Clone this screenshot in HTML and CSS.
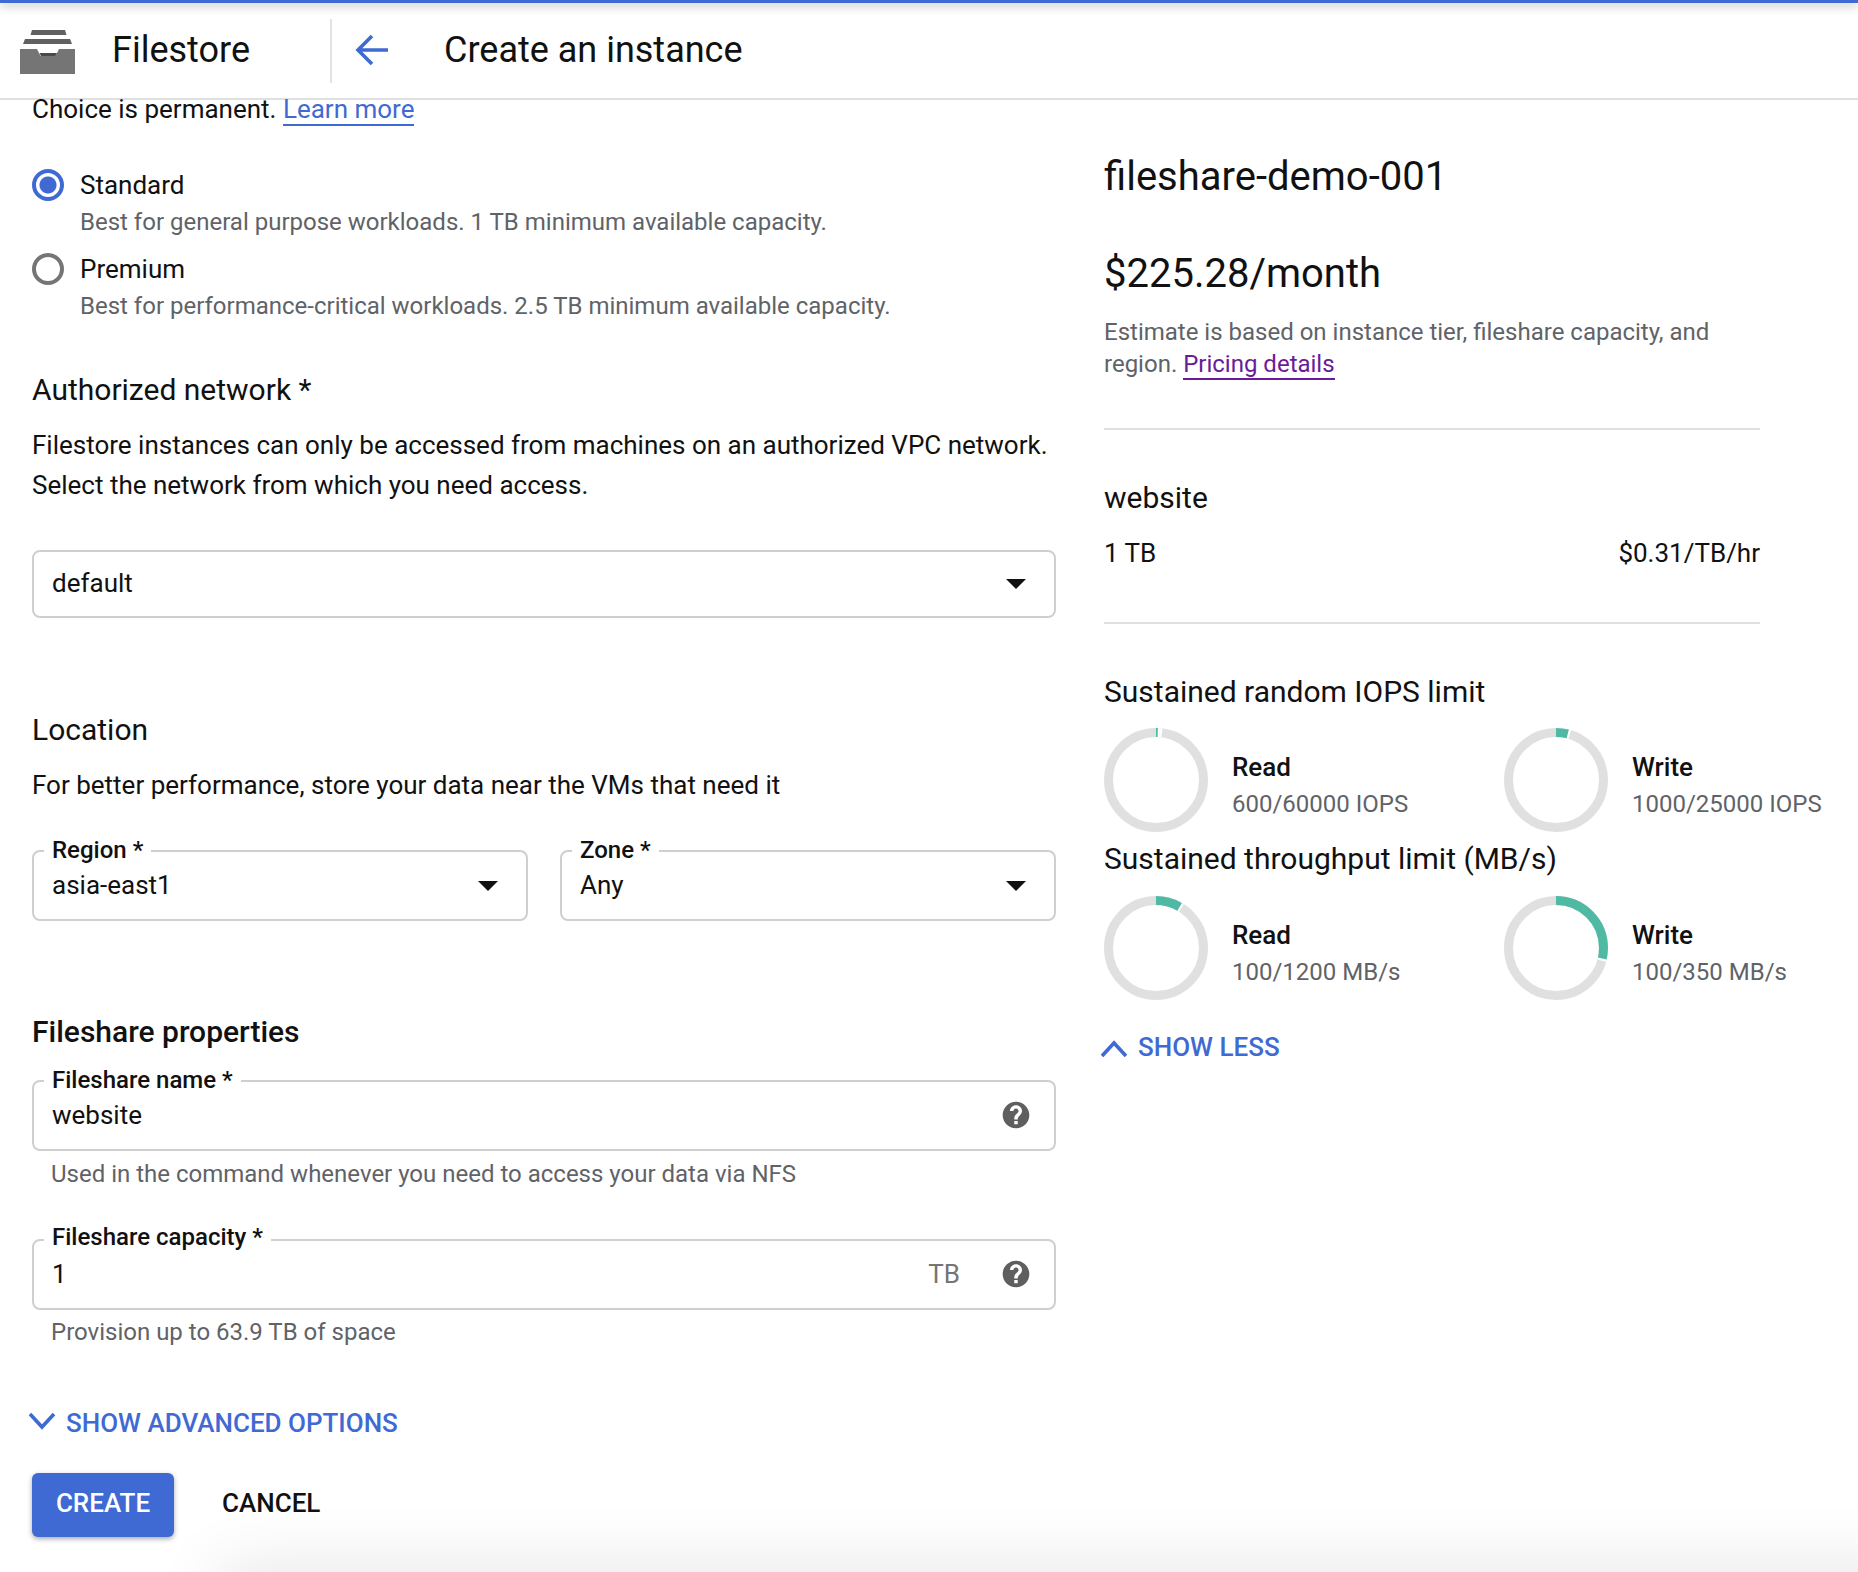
FILE: index.html
```html
<!DOCTYPE html>
<html lang="en">
<head>
<meta charset="utf-8">
<title>Create an instance</title>
<link rel="stylesheet" href="styles.css">
</head>
<body>
<div class="topbar"></div>
<header class="header">
  <div class="brand">
    <svg class="logo" width="56" height="44" viewBox="0 0 56 44"><path fill="#616161" d="M12 0h33l1.500 5H10.500z"/><path fill="#616161" d="M5 9h45l2 5H3z"/><path fill="#757575" d="M0 19h17l3.500 7h15l3.500-7h16v25H0z"/><path fill="#4a4a4a" d="M19.500 23h17.500l-1.500 3H21z"/></svg>
    <span class="brand-name">Filestore</span>
  </div>
  <svg class="back" width="36" height="36" viewBox="0 0 36 36"><path fill="none" stroke="#3f6ad4" stroke-width="3.600" d="M33 18H5M17 4L3 18l14 14"/></svg>
  <h1 class="page-title">Create an instance</h1>
</header>
<main class="page">
  <section class="left">
    <p class="body-text choice">Choice is permanent. <a class="link" href="#">Learn more</a></p>
    <div class="radio-row first">
      <span class="radio on"></span>
      <div><div class="radio-label">Standard</div><div class="muted">Best for general purpose workloads. 1 TB minimum available capacity.</div></div>
    </div>
    <div class="radio-row">
      <span class="radio"></span>
      <div><div class="radio-label">Premium</div><div class="muted">Best for performance-critical workloads. 2.5 TB minimum available capacity.</div></div>
    </div>
    <h2 class="section-title auth">Authorized network *</h2>
    <p class="body-text para">Filestore instances can only be accessed from machines on an authorized VPC network.<br>Select the network from which you need access.</p>
    <div class="field select-plain"><span class="value">default</span><span class="caret"></span></div>
    <h2 class="section-title loc">Location</h2>
    <p class="body-text para-loc">For better performance, store your data near the VMs that need it</p>
    <div class="two">
      <div class="field"><span class="legend">Region *</span><span class="value">asia-east1</span><span class="caret"></span></div>
      <div class="field"><span class="legend">Zone *</span><span class="value">Any</span><span class="caret"></span></div>
    </div>
    <h2 class="section-title strong props">Fileshare properties</h2>
    <div class="field"><span class="legend">Fileshare name *</span><span class="value">website</span>
      <svg class="help" width="32" height="32" viewBox="0 0 24 24"><use href="#q"/></svg></div>
    <div class="muted hint">Used in the command whenever you need to access your data via NFS</div>
    <div class="field cap"><span class="legend">Fileshare capacity *</span><span class="value">1</span><span class="unit">TB</span>
      <svg class="help" width="32" height="32" viewBox="0 0 24 24"><use href="#q"/></svg></div>
    <div class="muted hint">Provision up to 63.9 TB of space</div>
    <a class="toggle advanced" href="#"><svg width="30" height="20" viewBox="0 0 30 20"><path fill="none" stroke="#3f6ad4" stroke-width="3.600" d="M3 3l12 13L27 3"/></svg>SHOW ADVANCED OPTIONS</a>
    <div class="actions">
      <button class="btn primary">CREATE</button>
      <button class="btn plain">CANCEL</button>
    </div>
  </section>
  <aside class="right">
    <div class="name">fileshare-demo-001</div>
    <div class="price">$225.28/month</div>
    <p class="muted estimate">Estimate is based on instance tier, fileshare capacity, and region. <a class="visited" href="#">Pricing details</a></p>
    <hr class="rule r1">
    <div class="sub-title website">website</div>
    <div class="spread"><span>1 TB</span><span>$0.31/TB/hr</span></div>
    <hr class="rule r2">
    <div class="sub-title iops">Sustained random IOPS limit</div>
    <div class="gauges">
      <div class="gauge">
        <svg class="donut" width="104" height="104" viewBox="0 0 104 104"><circle class="d-bg" cx="52" cy="52" r="47.5"/><circle class="d-gap" cx="52" cy="52" r="47.5" pathLength="100" stroke-dasharray="2 98"/><circle class="d-val" cx="52" cy="52" r="47.5" pathLength="100" stroke-dasharray="0.6 99.4"/></svg>
        <div class="g-text"><div class="g-title">Read</div><div class="muted g-sub">600/60000 IOPS</div></div>
      </div>
      <div class="gauge">
        <svg class="donut" width="104" height="104" viewBox="0 0 104 104"><circle class="d-bg" cx="52" cy="52" r="47.5"/><circle class="d-gap" cx="52" cy="52" r="47.5" pathLength="100" stroke-dasharray="4.7 95.3"/><circle class="d-val" cx="52" cy="52" r="47.5" pathLength="100" stroke-dasharray="4 96"/></svg>
        <div class="g-text"><div class="g-title">Write</div><div class="muted g-sub">1000/25000 IOPS</div></div>
      </div>
    </div>
    <div class="sub-title thr">Sustained throughput limit (MB/s)</div>
    <div class="gauges">
      <div class="gauge">
        <svg class="donut" width="104" height="104" viewBox="0 0 104 104"><circle class="d-bg" cx="52" cy="52" r="47.5"/><circle class="d-gap" cx="52" cy="52" r="47.5" pathLength="100" stroke-dasharray="9 91"/><circle class="d-val" cx="52" cy="52" r="47.5" pathLength="100" stroke-dasharray="8.3 91.7"/></svg>
        <div class="g-text"><div class="g-title">Read</div><div class="muted g-sub">100/1200 MB/s</div></div>
      </div>
      <div class="gauge">
        <svg class="donut" width="104" height="104" viewBox="0 0 104 104"><circle class="d-bg" cx="52" cy="52" r="47.5"/><circle class="d-gap" cx="52" cy="52" r="47.5" pathLength="100" stroke-dasharray="29.3 70.7"/><circle class="d-val" cx="52" cy="52" r="47.5" pathLength="100" stroke-dasharray="28.6 71.4"/></svg>
        <div class="g-text"><div class="g-title">Write</div><div class="muted g-sub">100/350 MB/s</div></div>
      </div>
    </div>
    <a class="toggle less" href="#"><svg width="30" height="20" viewBox="0 0 30 20"><path fill="none" stroke="#3f6ad4" stroke-width="3.600" d="M3 17L15 4l12 13"/></svg>SHOW LESS</a>
  </aside>
</main>
<div class="bottom-shade"></div>
<svg class="defs" width="0" height="0"><symbol id="q" viewBox="0 0 24 24"><path fill="#5f5f5f" d="M12 2C6.480 2 2 6.480 2 12s4.480 10 10 10 10-4.480 10-10S17.520 2 12 2zm1.300 17h-2.600v-2.500h2.600V19zm2.300-7.500l-1 1c-.800.800-1.300 1.300-1.300 2.800h-2.600v-.6c0-1.200.500-2.300 1.300-3.100l1.300-1.300c.400-.300.600-.800.600-1.300 0-1-.800-1.800-1.900-1.800s-1.900.800-1.900 1.800H7.500c0-2.400 2-4.300 4.500-4.300s4.500 1.900 4.500 4.300c0 1-.400 1.900-.900 2.500z"/></symbol></svg>
</body>
</html>
```

FILE: styles.css
```css
* { box-sizing: border-box; }
html, body { margin: 0; height: 1572px; overflow: hidden; background: #fff; }
body { font-family: Roboto, "Noto Sans", sans-serif; font-size: 26px; color: #111; position: relative; }
p, h1, h2 { margin: 0; font-weight: 400; }

.topbar { height: 3px; background: #3f6ad4; box-shadow: 0 2px 10px rgba(60, 64, 67, .55); position: relative; z-index: 2; }
.header { height: 97px; display: flex; align-items: center; border-bottom: 2px solid #e0e0e0; }
.brand { width: 332px; height: 64px; display: flex; align-items: center; border-right: 2px solid #e3e3e3; padding-left: 20px; }
.logo { display: block; margin-top: 2px; }
.brand-name { font-size: 36px; margin-left: 36px; margin-top: -2px; }
.back { margin-left: 23px; margin-top: -1px; }
.page-title { font-size: 36px; margin-left: 53px; margin-top: -2px; }

.page { display: flex; padding-left: 32px; }
.left { width: 1024px; }
.right { width: 725px; margin-left: 48px; }

.body-text { line-height: 40px; }
.choice { line-height: 24px; margin-top: -3px; }
.link { color: #3f6ad4; text-decoration: none; border-bottom: 2px solid #3f6ad4; }
.visited { color: #6a1b9a; text-decoration: none; border-bottom: 2px solid #6a1b9a; }
.muted { color: #5f6368; font-size: 24px; }

.radio-row { display: flex; gap: 16px; margin-top: 10px; }
.radio-row.first { margin-top: 45px; }
.radio { width: 32px; height: 32px; border: 4px solid #757575; border-radius: 50%; flex: none; margin-top: 3px; background: #fff; }
.radio.on { border-color: #3f6ad4; background: radial-gradient(circle, #3f6ad4 0 8px, #fff 9px); }
.radio-label { line-height: 38px; }
.radio-row .muted { line-height: 36px; }

.section-title { font-size: 30px; line-height: 40px; }
.section-title.strong { font-weight: 500; }
.auth { margin-top: 46px; }
.para { margin-top: 15px; }
.loc { margin-top: 92px; }
.para-loc { margin-top: 15px; }
.two { display: flex; gap: 32px; margin-top: 45px; }
.two .field { flex: 1; }
.props { margin-top: 91px; }

.field { position: relative; height: 71px; border: 2px solid #cfcfcf; border-radius: 8px; display: flex; align-items: center; padding: 0 19px 2px 18px; }
.field.select-plain { margin-top: 45px; height: 68px; }
.value { flex: 1; }
.legend { position: absolute; left: 10px; top: -17px; padding: 0 8px; background: #fff; font-size: 24px; font-weight: 500; line-height: 30px; }
.caret { width: 0; height: 0; border-left: 10px solid transparent; border-right: 10px solid transparent; border-top: 10px solid #111; margin-right: 9px; margin-top: 2px; }
.help { margin-right: 3px; }
.unit { color: #757575; margin-right: 40px; }
.props + .field { margin-top: 28px; }
.hint { padding-left: 19px; line-height: 30px; margin-top: 8px; }
.cap { margin-top: 50px; }
.cap .legend { top: -19px; }
.cap + .hint { margin-top: 7px; }

.toggle { display: flex; align-items: center; color: #3f6ad4; text-decoration: none; font-weight: 500; }
.advanced { gap: 9px; margin-top: 60px; margin-left: -5px; line-height: 32px; }
.advanced svg { margin-top: -4px; }
.actions { display: flex; align-items: center; gap: 32px; margin-top: 34px; }
.btn { border: 0; font: 500 26px Roboto, sans-serif; height: 64px; background: none; color: #111; padding: 0 16px 5px; }
.btn.primary { width: 142px; background: #3f6ad4; color: #fff; border-radius: 6px; box-shadow: 0 2px 5px rgba(60, 64, 67, .45); padding: 0 0 5px; }

.name { font-size: 40px; line-height: 50px; margin-top: 52px; }
.price { font-size: 40px; line-height: 50px; margin-top: 47px; }
.estimate { width: 656px; line-height: 32px; margin-top: 17px; }
.rule { width: 656px; height: 2px; border: 0; background: #e0e0e0; margin: 0; }
.r1 { margin-top: 48px; }
.sub-title { font-size: 30px; line-height: 40px; }
.website { margin-top: 48px; }
.spread { width: 656px; display: flex; justify-content: space-between; line-height: 40px; margin-top: 15px; }
.r2 { margin-top: 49px; }
.iops { margin-top: 48px; }
.gauges { display: flex; margin-top: 16px; }
.gauge { width: 400px; display: flex; align-items: center; gap: 24px; flex: none; }
.g-text { padding-top: 10px; }
.donut { flex: none; transform: rotate(-90deg); }
.donut circle { fill: none; stroke-width: 9; }
.d-bg { stroke: #e0e0e0; }
.d-gap { stroke: #fff; }
.d-val { stroke: #4fb9a3; }
.g-title { font-weight: 500; line-height: 38px; }
.g-sub { line-height: 36px; }
.thr { margin-top: 7px; }
.thr + .gauges { margin-top: 17px; }
.less { gap: 9px; margin-top: 31px; margin-left: -5px; line-height: 32px; }
.less svg { margin-top: 3px; }

.bottom-shade { position: absolute; left: 220px; right: -80px; top: 1572px; height: 60px; box-shadow: 0 0 70px rgba(0, 0, 0, .12); }
.defs { position: absolute; }
```
